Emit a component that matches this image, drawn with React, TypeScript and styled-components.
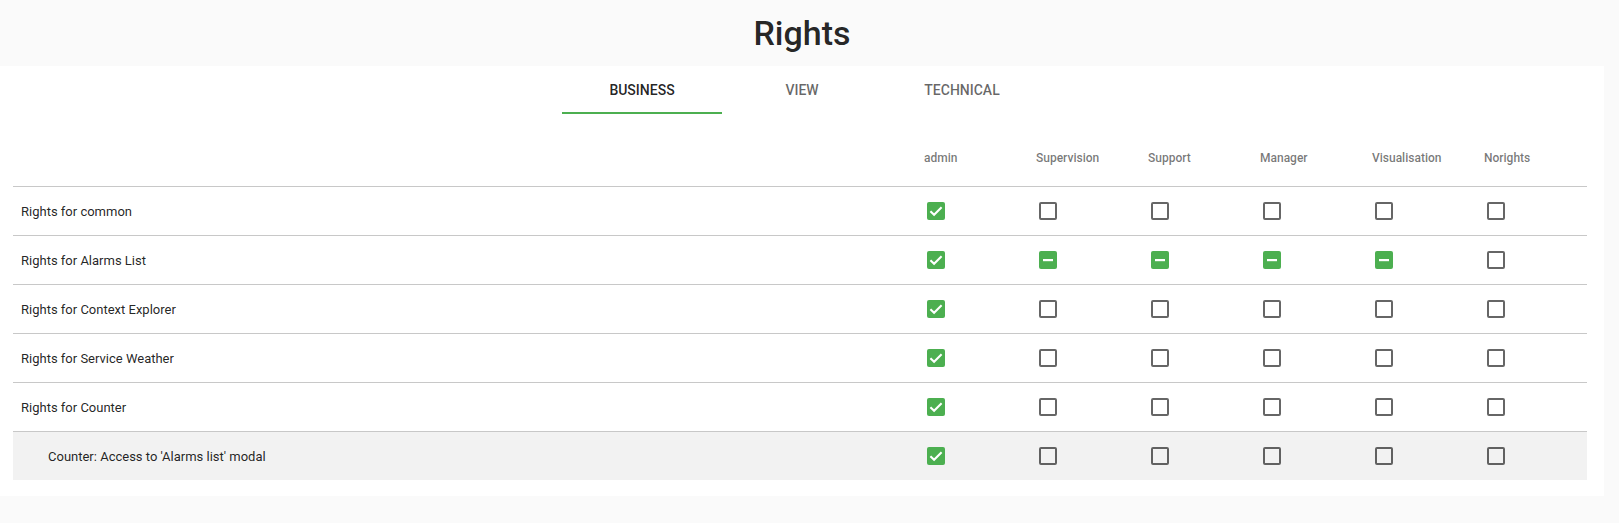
import React from 'react';
import styled, { createGlobalStyle } from 'styled-components';

type State = 'on' | 'off' | 'some';

const roles = ['admin', 'Supervision', 'Support', 'Manager', 'Visualisation', 'Norights'];

const rows: { label: string; sub?: boolean; rights: State[] }[] = [
  { label: 'Rights for common', rights: ['on', 'off', 'off', 'off', 'off', 'off'] },
  { label: 'Rights for Alarms List', rights: ['on', 'some', 'some', 'some', 'some', 'off'] },
  { label: 'Rights for Context Explorer', rights: ['on', 'off', 'off', 'off', 'off', 'off'] },
  { label: 'Rights for Service Weather', rights: ['on', 'off', 'off', 'off', 'off', 'off'] },
  { label: 'Rights for Counter', rights: ['on', 'off', 'off', 'off', 'off', 'off'] },
  { label: "Counter: Access to 'Alarms list' modal", sub: true, rights: ['on', 'off', 'off', 'off', 'off', 'off'] }
];

const tabs = ['Business', 'View', 'Technical'];

const Global = createGlobalStyle`
  body {
    margin: 0;
    background: #fafafa;
    font-family: Roboto, 'Liberation Sans', sans-serif;
    color: rgba(0, 0, 0, 0.87);
  }
`;

const Page = styled.div`
  display: flex;
  flex-direction: column;
`;

const Header = styled.div`
  height: 66px;
  display: flex;
  align-items: center;
  justify-content: center;
  padding-right: 15px;

  h1 {
    margin: 0;
    font-size: 34px;
    font-weight: 500;
    line-height: 40px;
    color: rgba(0, 0, 0, 0.87);
  }
`;

const Card = styled.div`
  background: #fff;
  margin-right: 15px;
  padding: 0 17px 16px 13px;
`;

const TabBar = styled.div`
  display: flex;
  justify-content: center;
  height: 48px;
  margin-left: -13px;
  margin-right: -17px;
`;

const Tab = styled.div<{ $active?: boolean }>`
  width: 160px;
  display: flex;
  align-items: center;
  justify-content: center;
  font-size: 14px;
  font-weight: 500;
  text-transform: uppercase;
  color: ${(p) => (p.$active ? 'rgba(0, 0, 0, 0.87)' : 'rgba(0, 0, 0, 0.6)')};
  box-shadow: ${(p) => (p.$active ? 'inset 0 -2px 0 #4caf50' : 'none')};
`;

const Table = styled.div`
  margin-top: 16px;
  display: grid;
  grid-template-columns: 1fr repeat(5, 112px) 127px;
`;

const Row = styled.div<{ $head?: boolean; $sub?: boolean; $last?: boolean }>`
  display: contents;

  & > div {
    height: ${(p) => (p.$head ? '56px' : '48px')};
    display: flex;
    align-items: center;
    padding-left: 24px;
    background: ${(p) => (p.$sub ? '#f2f2f2' : 'transparent')};
    border-bottom: ${(p) => (p.$last ? 'none' : '1px solid #c8c8c8')};
  }
`;

const HeadCell = styled.div`
  font-size: 12px;
  font-weight: 500;
  color: rgba(0, 0, 0, 0.54);
`;

const Label = styled.div<{ $sub?: boolean }>`
  && {
    padding-left: ${(p) => (p.$sub ? '35px' : '8px')};
  }
  font-size: 13px;
`;

const Cell = styled.div``;

const Box = styled.span<{ $state: State }>`
  width: 24px;
  height: 24px;
  display: flex;
  align-items: center;
  justify-content: center;

  span {
    box-sizing: border-box;
    width: 18px;
    height: 18px;
    border-radius: 2px;
    display: flex;
    align-items: center;
    justify-content: center;
    border: ${(p) => (p.$state === 'off' ? '2px solid rgba(0, 0, 0, 0.6)' : 'none')};
    background: ${(p) => (p.$state === 'off' ? 'transparent' : '#4caf50')};
  }
`;

const Check = ({ state }: { state: State }) => (
  <Box $state={state}>
    <span>
      {state === 'on' && (
        <svg width="18" height="18" viewBox="0 0 18 18">
          <path d="M3.4 9.2 L7.1 12.8 L14.6 5.3" fill="none" stroke="#fff" strokeWidth="2.1" />
        </svg>
      )}
      {state === 'some' && (
        <svg width="18" height="18" viewBox="0 0 18 18">
          <rect x="4" y="8" width="10" height="2.2" fill="#fff" />
        </svg>
      )}
    </span>
  </Box>
);

const App = () => {
  return (
    <Page>
      <Global />
      <Header>
        <h1>Rights</h1>
      </Header>
      <Card>
        <TabBar>
          {tabs.map((t, i) => (
            <Tab key={t} $active={i === 0}>
              {t}
            </Tab>
          ))}
        </TabBar>
        <Table>
          <Row $head>
            <HeadCell />
            {roles.map((r) => (
              <HeadCell key={r}>{r}</HeadCell>
            ))}
          </Row>
          {rows.map((row, i) => (
            <Row key={row.label} $sub={row.sub} $last={i === rows.length - 1}>
              <Label $sub={row.sub}>{row.label}</Label>
              {row.rights.map((s, j) => (
                <Cell key={j}>
                  <Check state={s} />
                </Cell>
              ))}
            </Row>
          ))}
        </Table>
      </Card>
    </Page>
  );
};

export default App;
